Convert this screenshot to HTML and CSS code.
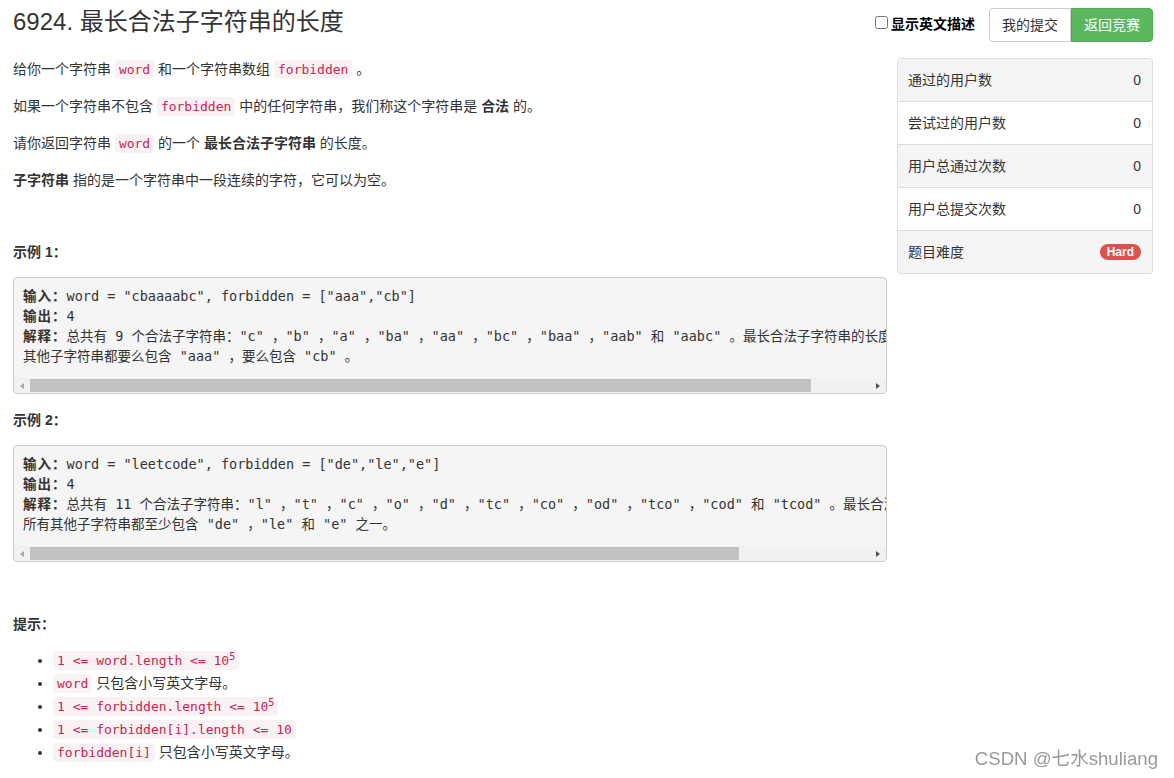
FILE: index.html
```html
<!DOCTYPE html>
<html lang="zh-CN">

<head>
    <meta charset="UTF-8">
    <meta name="viewport" content="width=device-width, initial-scale=1.0">
    <title>6924. 最长合法子字符串的长度</title>
    <link rel="stylesheet" href="styles.css">
</head>

<body>
    <!-- Header -->
    <header class="top">
        <h1 class="title">6924. 最长合法子字符串的长度</h1>
        <div class="actions">
            <label class="en-toggle"><input type="checkbox">显示英文描述</label>
            <div class="btn-group">
                <a class="btn" href="#">我的提交</a>
                <a class="btn btn-green" href="#">返回竞赛</a>
            </div>
        </div>
    </header>

    <div class="main">
        <div class="desc">
            <p>给你一个字符串 <code>word</code> 和一个字符串数组 <code>forbidden</code> 。</p>
            <p>如果一个字符串不包含 <code>forbidden</code> 中的任何字符串，我们称这个字符串是 <strong>合法</strong> 的。</p>
            <p>请你返回字符串 <code>word</code> 的一个 <strong>最长合法子字符串</strong> 的长度。</p>
            <p><strong>子字符串</strong> 指的是一个字符串中一段连续的字符，它可以为空。</p>

            <p class="section-title spaced"><strong>示例 1：</strong></p>
            <div class="example">
                <pre class="example-code"><strong>输入：</strong>word = "cbaaaabc", forbidden = ["aaa","cb"]
<strong>输出：</strong>4
<strong>解释：</strong>总共有 9 个合法子字符串："c" ，"b" ，"a" ，"ba" ，"aa" ，"bc" ，"baa" ，"aab" 和 "aabc" 。最长合法子字符串的长度为 4 。
其他子字符串都要么包含 "aaa" ，要么包含 "cb" 。</pre>
                <div class="hscroll">
                    <span class="arrow arrow-left"></span>
                    <span class="track"><span class="thumb" style="width: 93%"></span></span>
                    <span class="arrow arrow-right"></span>
                </div>
            </div>

            <p class="section-title"><strong>示例 2：</strong></p>
            <div class="example">
                <pre class="example-code"><strong>输入：</strong>word = "leetcode", forbidden = ["de","le","e"]
<strong>输出：</strong>4
<strong>解释：</strong>总共有 11 个合法子字符串："l" ，"t" ，"c" ，"o" ，"d" ，"tc" ，"co" ，"od" ，"tco" ，"cod" 和 "tcod" 。最长合法子字符串的长度为 4 。
所有其他子字符串都至少包含 "de" ，"le" 和 "e" 之一。</pre>
                <div class="hscroll">
                    <span class="arrow arrow-left"></span>
                    <span class="track"><span class="thumb" style="width: 84.4%"></span></span>
                    <span class="arrow arrow-right"></span>
                </div>
            </div>

            <p class="section-title spaced hint"><strong>提示：</strong></p>
            <ul class="hints">
                <li><code>1 &lt;= word.length &lt;= 10<sup>5</sup></code></li>
                <li><code>word</code> 只包含小写英文字母。</li>
                <li><code>1 &lt;= forbidden.length &lt;= 10<sup>5</sup></code></li>
                <li><code>1 &lt;= forbidden[i].length &lt;= 10</code></li>
                <li><code>forbidden[i]</code> 只包含小写英文字母。</li>
            </ul>
        </div>

        <!-- Stats panel -->
        <aside class="stats">
            <div class="stat-row"><span>通过的用户数</span><span>0</span></div>
            <div class="stat-row"><span>尝试过的用户数</span><span>0</span></div>
            <div class="stat-row"><span>用户总通过次数</span><span>0</span></div>
            <div class="stat-row"><span>用户总提交次数</span><span>0</span></div>
            <div class="stat-row"><span>题目难度</span><span class="badge">Hard</span></div>
        </aside>
    </div>

    <div class="watermark">CSDN @七水shuliang</div>
</body>

</html>
```

FILE: styles.css
```css
body {
    margin: 0;
    padding: 0 21px 0 13px;
    font-family: "Liberation Sans", "Noto Sans CJK SC", sans-serif;
    font-size: 14px;
    color: #333;
    background-color: white;
}

/* header */
.top {
    display: flex;
    justify-content: space-between;
    align-items: flex-start;
    height: 42px;
}

.title {
    margin: 9px 0 0;
    font-size: 24px;
    line-height: 26px;
    font-weight: normal;
    color: #333;
}

.actions {
    display: flex;
    align-items: center;
    margin-top: 8px;
}

.en-toggle {
    display: flex;
    align-items: center;
    font-weight: bold;
    color: #000;
    margin-right: 14px;
    margin-top: -5px;
}

.en-toggle input {
    width: 13px;
    height: 13px;
    margin: 0 3px 0 0;
}

.btn-group {
    display: flex;
}

.btn {
    display: block;
    padding: 6px 12px;
    line-height: 20px;
    border: 1px solid #ccc;
    background-color: white;
    color: #333;
    text-decoration: none;
    border-radius: 4px 0 0 4px;
}

.btn-green {
    background-color: #5cb85c;
    border-color: #4cae4c;
    color: white;
    border-radius: 0 4px 4px 0;
}

/* body columns */
.main {
    display: flex;
    align-items: flex-start;
    margin-top: 8px;
}

.desc {
    flex: 1;
    min-width: 0;
}

.desc p {
    margin: 9px 0 17px;
    line-height: 20px;
}

code {
    font-family: "DejaVu Sans Mono", monospace;
    font-size: 13px;
    line-height: 1;
    color: #c7254e;
    background-color: #f9f2f4;
    padding: 2px 4px;
    border-radius: 4px;
}

.desc p.section-title {
    margin: 0 0 15px;
}

.desc p.spaced {
    margin-top: 52px;
}

/* example blocks with their scrollbar */
.example {
    margin: 0 0 16px;
    background-color: #f5f5f5;
    border: 1px solid #ccc;
    border-radius: 4px;
    overflow: hidden;
}

.example-code {
    margin: 0;
    padding: 8px 9px 12px;
    font-family: "DejaVu Sans Mono", "Noto Sans CJK SC", monospace;
    font-size: 13.5px;
    line-height: 20px;
    color: #333;
    white-space: pre;
    overflow: hidden;
}

.example-code strong {
    letter-spacing: 1px;
}

.hscroll {
    display: flex;
    height: 15px;
    background-color: #f1f1f1;
}

.arrow {
    flex: 0 0 16px;
    display: flex;
    align-items: center;
    justify-content: center;
}

.arrow::before {
    content: "";
    width: 0;
    height: 0;
    border-top: 3.5px solid transparent;
    border-bottom: 3.5px solid transparent;
}

.arrow-left::before {
    border-right: 4px solid #a3a3a3;
}

.arrow-right::before {
    border-left: 4px solid #505050;
}

.track {
    flex: 1;
    display: flex;
    padding: 1px 0;
}

.thumb {
    display: block;
    background-color: #c1c1c1;
}

.hints {
    margin: 0;
    padding-left: 40px;
}

.hints li {
    line-height: 23px;
}

sup {
    line-height: 0;
    font-size: 10px;
}

/* stats */
.stats {
    flex: 0 0 256px;
    margin-left: 10px;
    margin-top: 8px;
    box-sizing: border-box;
    border: 1px solid #ddd;
    border-radius: 4px;
    overflow: hidden;
}

.stat-row {
    display: flex;
    justify-content: space-between;
    align-items: center;
    padding: 11px 11px 11px 10px;
    line-height: 20px;
    background-color: #f5f5f5;
}

.stat-row + .stat-row {
    border-top: 1px solid #ddd;
}

.stat-row:nth-child(even) {
    background-color: white;
}

.badge {
    background-color: #d9534f;
    color: white;
    font-weight: bold;
    font-size: 12px;
    line-height: 16px;
    padding: 0 7px;
    border-radius: 10px;
}

.watermark {
    position: fixed;
    right: 16px;
    bottom: 9px;
    font-family: "Liberation Sans", "Noto Sans CJK SC", sans-serif;
    font-size: 18.6px;
    line-height: 21px;
    color: #999;
    text-shadow: 0 0 1px #fff;
}
```
